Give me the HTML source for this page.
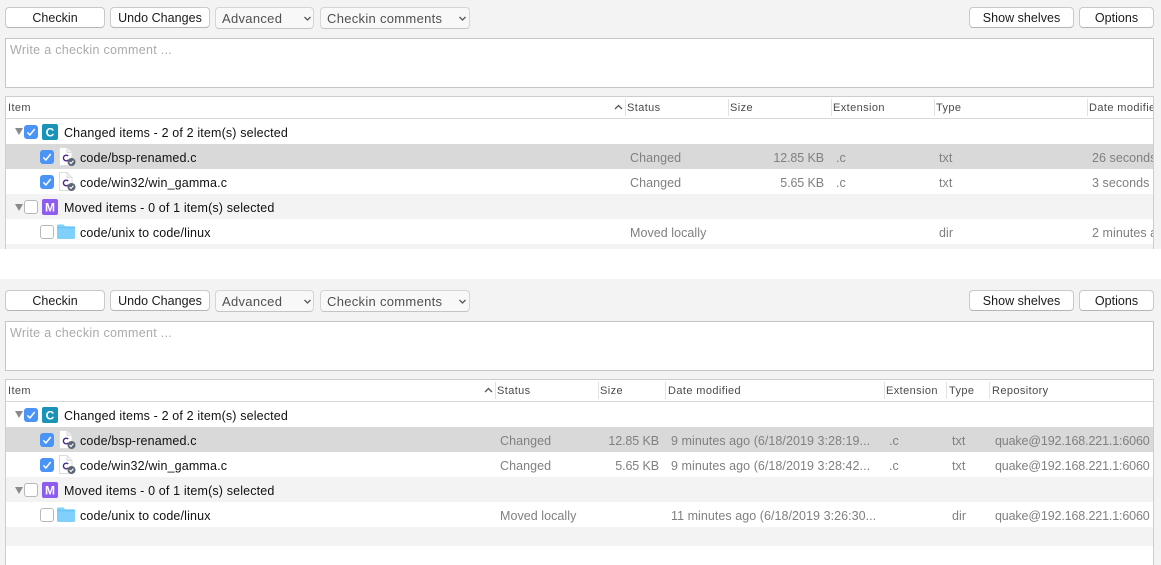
<!DOCTYPE html>
<html><head><meta charset="utf-8">
<style>
html,body{margin:0;padding:0;background:#fff;}
body{width:1161px;height:565px;position:relative;overflow:hidden;font-family:"Liberation Sans",sans-serif;font-size:12.5px;color:#1a1a1a;}
.p{position:absolute;left:0;width:1161px;background:#f3f3f3;overflow:hidden;}
.btn{position:absolute;top:7px;height:19px;line-height:20px;background:#fff;border:1px solid #c9c9c9;border-bottom-color:#b5b5b5;border-radius:4px;text-align:center;color:#1a1a1a;box-sizing:content-box;letter-spacing:.03px;}
.sel{position:absolute;top:7px;height:20px;line-height:21px;background:#f8f8f8;border:1px solid #d5d5d5;border-bottom-color:#c4c4c4;border-radius:4px;color:#505050;padding-left:6px;box-sizing:content-box;font-size:13px;letter-spacing:.3px;}
.sel svg{position:absolute;top:7px;}
.ta{position:absolute;left:5px;top:38px;width:1147px;height:48px;background:#fff;border:1px solid #c6c6c6;color:#aaa;letter-spacing:.3px;}
.ta span{position:absolute;left:4px;top:4px;}
.tb{position:absolute;left:5px;top:96px;width:1147px;background:#fff;border:1px solid #cdcdcd;border-bottom:0;}
.hd{position:absolute;left:0;top:0;height:21px;width:100%;border-bottom:1px solid #d8d8d8;background:#fff;font-size:11px;color:#4a4a4a;line-height:23px;letter-spacing:.4px;}
.hd .s{position:absolute;top:2px;width:1px;height:17px;background:#e2e2e2;}
.hd .t{position:absolute;top:0;white-space:nowrap;}
.r{position:absolute;left:0;width:100%;height:25px;line-height:28px;}
.r .c{position:absolute;top:0;color:#808080;white-space:nowrap;letter-spacing:.05px;}
.r .q{letter-spacing:-.14px;}
.r .z{letter-spacing:-.1px;}
.r .n{position:absolute;left:74px;top:0;white-space:nowrap;color:#111;letter-spacing:.15px;}
.r svg{position:absolute;}
.gr{line-height:27px;}
.gr .n{left:58px;}
.ck{left:34px;top:6px;}
.fi{left:53px;top:3px;}
.fo{left:51px;top:5px;}
</style></head><body>
<svg width="0" height="0" style="position:absolute">
<defs>
<symbol id="on" viewBox="0 0 14 14"><rect width="14" height="14" rx="3" fill="#4a94f8"/><path d="M3.400 7.400l2.500 2.600 4.800-6" fill="none" stroke="#fff" stroke-width="1.500"/></symbol>
<symbol id="off" viewBox="0 0 14 14"><rect x=".5" y=".5" width="13" height="13" rx="2.500" fill="#fff" stroke="#b8b8b8"/></symbol>
<symbol id="tri" viewBox="0 0 8 7"><path d="M0 0h8L4 7z" fill="#8a8a8a"/></symbol>
<symbol id="fold" viewBox="0 0 18 15"><path d="M0 2a1.500 1.500 0 0 1 1.500-1.500h5L8 2.200h8.500A1.500 1.500 0 0 1 18 3.700V13.500a1.500 1.500 0 0 1-1.500 1.500h-15A1.500 1.500 0 0 1 0 13.500z" fill="#7fd0fb"/><path d="M0 3.300h18v1H0z" fill="#63bdf3"/></symbol>
<symbol id="file" viewBox="0 0 18 19"><path d="M.5.500h7.500l5 5v13H.5z" fill="#fff" stroke="#dcdcdc"/><path d="M8 .5v5h5" fill="#f0f0f0" stroke="#dcdcdc"/><path d="M9.200 9A2.800 2.800 0 1 0 9.200 13" fill="none" stroke="#4b2a8f" stroke-width="1.500"/><circle cx="12.500" cy="15" r="4" fill="#5b6672"/><path d="M10.600 15l1.400 1.500 2.400-2.800" fill="none" stroke="#fff" stroke-width="1.100"/></symbol>
</defs>
</svg>

<div class="p" style="top:0;height:249px;">
  <div class="btn" style="left:5px;width:98px;">Checkin</div>
  <div class="btn" style="left:110px;width:98px;">Undo Changes</div>
  <div class="sel" style="left:215px;width:91px;">Advanced<svg style="left:87px" width="9" height="8" viewBox="0 0 9 8"><path d="M1.500 2l3 3 3-3" fill="none" stroke="#555" stroke-width="1.300"/></svg></div>
  <div class="sel" style="left:320px;width:142px;">Checkin comments<svg style="left:137px" width="9" height="8" viewBox="0 0 9 8"><path d="M1.500 2l3 3 3-3" fill="none" stroke="#555" stroke-width="1.300"/></svg></div>
  <div class="btn" style="left:969px;width:103px;">Show shelves</div>
  <div class="btn" style="left:1079px;width:73px;">Options</div>
  <div class="ta"><span>Write a checkin comment ...</span></div>
  <div class="tb" style="height:153px;overflow:hidden;">
    <div class="hd">
      <span class="t" style="left:2px;">Item</span>
      <svg style="position:absolute;left:608px;top:7px" width="9" height="7" viewBox="0 0 9 7"><path d="M1 5l3.500-3.500L8 5" fill="none" stroke="#555" stroke-width="1.300"/></svg>
      <i class="s" style="left:619px"></i><span class="t" style="left:621px;">Status</span>
      <i class="s" style="left:722px"></i><span class="t" style="left:724px;">Size</span>
      <i class="s" style="left:825px"></i><span class="t" style="left:827px;">Extension</span>
      <i class="s" style="left:928px"></i><span class="t" style="left:930px;">Type</span>
      <i class="s" style="left:1081px"></i><span class="t" style="left:1083px;">Date modified</span>
    </div>
    <div class="r gr" style="top:23px;background:#fff;">
      <svg style="left:9px;top:8px" width="8" height="7"><use href="#tri"/></svg>
      <svg style="left:18px;top:5px" width="14" height="14"><use href="#on"/></svg>
      <svg style="left:36px;top:4px" width="16" height="16" viewBox="0 0 16 16"><rect width="16" height="16" rx="2" fill="#1a93b8"/><text x="8" y="12.500" font-family="Liberation Sans" font-size="12" font-weight="700" fill="#fff" text-anchor="middle">C</text></svg>
      <span class="n">Changed items - 2 of 2 item(s) selected</span>
    </div>
    <div class="r" style="top:47px;background:#d9d9d9;">
      <svg class="ck" width="14" height="14"><use href="#on"/></svg>
      <svg class="fi" width="18" height="19"><use href="#file"/></svg>
      <span class="n">code/bsp-renamed.c</span>
      <span class="c" style="left:624px;">Changed</span>
      <span class="c z" style="right:329px;">12.85 KB</span>
      <span class="c" style="left:830px;">.c</span>
      <span class="c" style="left:933px;">txt</span>
      <span class="c" style="left:1086px;">26 seconds</span>
    </div>
    <div class="r" style="top:72px;background:#fff;">
      <svg class="ck" width="14" height="14"><use href="#on"/></svg>
      <svg class="fi" width="18" height="19"><use href="#file"/></svg>
      <span class="n">code/win32/win_gamma.c</span>
      <span class="c" style="left:624px;">Changed</span>
      <span class="c z" style="right:329px;">5.65 KB</span>
      <span class="c" style="left:830px;">.c</span>
      <span class="c" style="left:933px;">txt</span>
      <span class="c" style="left:1086px;">3 seconds</span>
    </div>
    <div class="r gr" style="top:97px;background:#f3f3f3;line-height:28px;">
      <svg style="left:9px;top:10px" width="8" height="7"><use href="#tri"/></svg>
      <svg style="left:18px;top:6px" width="14" height="14"><use href="#off"/></svg>
      <svg style="left:36px;top:5px" width="16" height="16" viewBox="0 0 16 16"><rect width="16" height="16" rx="2" fill="#8f5cf0"/><text x="8" y="12.500" font-family="Liberation Sans" font-size="12" font-weight="700" fill="#fff" text-anchor="middle">M</text></svg>
      <span class="n">Moved items - 0 of 1 item(s) selected</span>
    </div>
    <div class="r" style="top:122px;background:#fff;">
      <svg class="ck" width="14" height="14"><use href="#off"/></svg>
      <svg class="fo" width="18" height="15"><use href="#fold"/></svg>
      <span class="n">code/unix to code/linux</span>
      <span class="c" style="left:624px;">Moved locally</span>
      <span class="c" style="left:933px;">dir</span>
      <span class="c" style="left:1086px;">2 minutes a</span>
    </div>
    <div class="r" style="top:147px;background:#f3f3f3;"></div>
  </div>
</div>

<div class="p" style="top:279px;height:286px;">
  <div class="btn" style="left:5px;width:98px;top:11px;">Checkin</div>
  <div class="btn" style="left:110px;width:98px;top:11px;">Undo Changes</div>
  <div class="sel" style="left:215px;width:91px;top:11px;">Advanced<svg style="left:87px" width="9" height="8" viewBox="0 0 9 8"><path d="M1.500 2l3 3 3-3" fill="none" stroke="#555" stroke-width="1.300"/></svg></div>
  <div class="sel" style="left:320px;width:142px;top:11px;">Checkin comments<svg style="left:137px" width="9" height="8" viewBox="0 0 9 8"><path d="M1.500 2l3 3 3-3" fill="none" stroke="#555" stroke-width="1.300"/></svg></div>
  <div class="btn" style="left:969px;width:103px;top:11px;">Show shelves</div>
  <div class="btn" style="left:1079px;width:73px;top:11px;">Options</div>
  <div class="ta" style="top:42px;"><span>Write a checkin comment ...</span></div>
  <div class="tb" style="top:100px;height:186px;overflow:hidden;">
    <div class="hd">
      <span class="t" style="left:2px;">Item</span>
      <svg style="position:absolute;left:478px;top:7px" width="9" height="7" viewBox="0 0 9 7"><path d="M1 5l3.500-3.500L8 5" fill="none" stroke="#555" stroke-width="1.300"/></svg>
      <i class="s" style="left:489px"></i><span class="t" style="left:491px;">Status</span>
      <i class="s" style="left:592px"></i><span class="t" style="left:594px;">Size</span>
      <i class="s" style="left:659px"></i><span class="t" style="left:662px;">Date modified</span>
      <i class="s" style="left:878px"></i><span class="t" style="left:880px;">Extension</span>
      <i class="s" style="left:940px"></i><span class="t" style="left:943px;">Type</span>
      <i class="s" style="left:983px"></i><span class="t" style="left:986px;">Repository</span>
    </div>
    <div class="r gr" style="top:23px;background:#fff;">
      <svg style="left:9px;top:8px" width="8" height="7"><use href="#tri"/></svg>
      <svg style="left:18px;top:5px" width="14" height="14"><use href="#on"/></svg>
      <svg style="left:36px;top:4px" width="16" height="16" viewBox="0 0 16 16"><rect width="16" height="16" rx="2" fill="#1a93b8"/><text x="8" y="12.500" font-family="Liberation Sans" font-size="12" font-weight="700" fill="#fff" text-anchor="middle">C</text></svg>
      <span class="n">Changed items - 2 of 2 item(s) selected</span>
    </div>
    <div class="r" style="top:47px;background:#d9d9d9;">
      <svg class="ck" width="14" height="14"><use href="#on"/></svg>
      <svg class="fi" width="18" height="19"><use href="#file"/></svg>
      <span class="n">code/bsp-renamed.c</span>
      <span class="c" style="left:494px;">Changed</span>
      <span class="c z" style="right:494px;">12.85 KB</span>
      <span class="c" style="left:665px;">9 minutes ago (6/18/2019 3:28:19...</span>
      <span class="c" style="left:883px;">.c</span>
      <span class="c" style="left:946px;">txt</span>
      <span class="c q" style="left:989px;">quake@192.168.221.1:6060</span>
    </div>
    <div class="r" style="top:72px;background:#fff;">
      <svg class="ck" width="14" height="14"><use href="#on"/></svg>
      <svg class="fi" width="18" height="19"><use href="#file"/></svg>
      <span class="n">code/win32/win_gamma.c</span>
      <span class="c" style="left:494px;">Changed</span>
      <span class="c z" style="right:494px;">5.65 KB</span>
      <span class="c" style="left:665px;">9 minutes ago (6/18/2019 3:28:42...</span>
      <span class="c" style="left:883px;">.c</span>
      <span class="c" style="left:946px;">txt</span>
      <span class="c q" style="left:989px;">quake@192.168.221.1:6060</span>
    </div>
    <div class="r gr" style="top:97px;background:#f3f3f3;line-height:28px;">
      <svg style="left:9px;top:10px" width="8" height="7"><use href="#tri"/></svg>
      <svg style="left:18px;top:6px" width="14" height="14"><use href="#off"/></svg>
      <svg style="left:36px;top:5px" width="16" height="16" viewBox="0 0 16 16"><rect width="16" height="16" rx="2" fill="#8f5cf0"/><text x="8" y="12.500" font-family="Liberation Sans" font-size="12" font-weight="700" fill="#fff" text-anchor="middle">M</text></svg>
      <span class="n">Moved items - 0 of 1 item(s) selected</span>
    </div>
    <div class="r" style="top:122px;background:#fff;">
      <svg class="ck" width="14" height="14"><use href="#off"/></svg>
      <svg class="fo" width="18" height="15"><use href="#fold"/></svg>
      <span class="n">code/unix to code/linux</span>
      <span class="c" style="left:494px;">Moved locally</span>
      <span class="c" style="left:665px;">11 minutes ago (6/18/2019 3:26:30...</span>
      <span class="c" style="left:946px;">dir</span>
      <span class="c q" style="left:989px;">quake@192.168.221.1:6060</span>
    </div>
    <div class="r" style="top:147px;height:19px;background:#f3f3f3;"></div>
    <div class="r" style="top:166px;height:20px;background:#fff;"></div>
  </div>
</div>
</body></html>
